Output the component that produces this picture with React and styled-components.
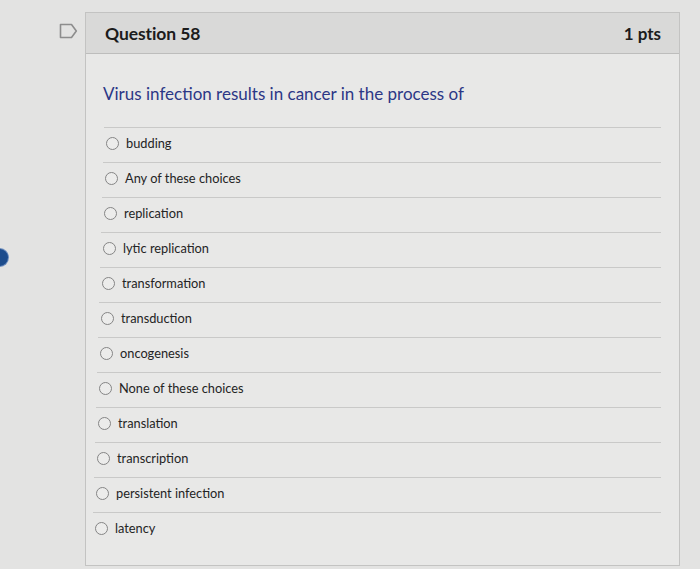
import React from "react";
import styled, { createGlobalStyle } from "styled-components";

const Global = createGlobalStyle`
  html, body { margin: 0; padding: 0; background: #e3e3e2; }
  body { font-family: Lato, "Open Sans", sans-serif; }
`;

const Page = styled.div`
  position: relative;
  width: 700px;
  height: 569px;
  overflow: hidden;
  display: flex;
  align-items: flex-start;
  padding-top: 12px;
  box-sizing: border-box;
  background: #e3e3e2;
`;

const Gutter = styled.div`
  width: 85px;
  flex: none;
  display: flex;
  justify-content: flex-start;
  padding: 11px 0 0 59px;
  box-sizing: border-box;
`;

const SideDot = styled.div`
  position: absolute;
  left: -9px;
  top: 249px;
  width: 17px;
  height: 17px;
  border-radius: 50%;
  background: #1d4c8c;
  box-shadow: 0 0 0 1px #6f8fbf;
`;

const Card = styled.section`
  width: 595px;
  height: 554px;
  flex: none;
  border: 1px solid #c3c3c2;
  background: #e8e8e7;
  box-sizing: border-box;
  display: flex;
  flex-direction: column;
`;

const Header = styled.header`
  height: 41px;
  flex: none;
  display: flex;
  align-items: center;
  justify-content: space-between;
  padding: 0 18px 0 19px;
  background: #d9d9d8;
  border-bottom: 1px solid #bdbdbc;
  box-sizing: border-box;
  color: #1c1c1c;
`;

const Title = styled.h2`
  margin: 0;
  font-size: 17.5px;
  font-weight: 700;
  letter-spacing: -0.1px;
`;

const Points = styled.span`
  font-size: 17px;
  font-weight: 700;
`;

const Body = styled.div`
  padding: 27px 18px 0 0;
  display: flex;
  flex-direction: column;
`;

const Prompt = styled.p`
  margin: 0 0 20px 17px;
  font-size: 17px;
  line-height: 26px;
  color: #2c3786;
`;

const Options = styled.ul`
  list-style: none;
  margin: 0;
  padding: 0;
  display: flex;
  flex-direction: column;
`;

const Option = styled.li`
  height: 35px;
  box-sizing: border-box;
  border-top: 1px solid #c9c9c8;
  display: flex;
  align-items: center;
  gap: 7px;
  padding-left: 2px;
  padding-bottom: 4px;
  font-size: 12.8px;
  color: #242424;
`;

const Radio = styled.span`
  width: 13px;
  height: 13px;
  border-radius: 50%;
  border: 1.3px solid #858585;
  box-sizing: border-box;
  background: #ececeb;
  flex: none;
`;

const choices = [
  "budding",
  "Any of these choices",
  "replication",
  "lytic replication",
  "transformation",
  "transduction",
  "oncogenesis",
  "None of these choices",
  "translation",
  "transcription",
  "persistent infection",
  "latency",
];

const Bookmark = () => (
  <svg width="19" height="16" viewBox="0 0 19 16" fill="none">
    <path
      d="M1.5 1.5 H12.5 L17.3 8 L12.5 14.5 H1.5 Z"
      stroke="#8d8d8d"
      strokeWidth="1.6"
      strokeLinejoin="round"
    />
  </svg>
);

export default function App() {
  return (
    <>
      <Global />
      <Page>
        <SideDot />
        <Gutter>
          <Bookmark />
        </Gutter>
        <Card>
          <Header>
            <Title>Question 58</Title>
            <Points>1 pts</Points>
          </Header>
          <Body>
            <Prompt>Virus infection results in cancer in the process of</Prompt>
            <Options>
              {choices.map((c, i) => (
                <Option key={c} style={{ marginLeft: 18 - i }}>
                  <Radio />
                  <span>{c}</span>
                </Option>
              ))}
            </Options>
          </Body>
        </Card>
      </Page>
    </>
  );
}
